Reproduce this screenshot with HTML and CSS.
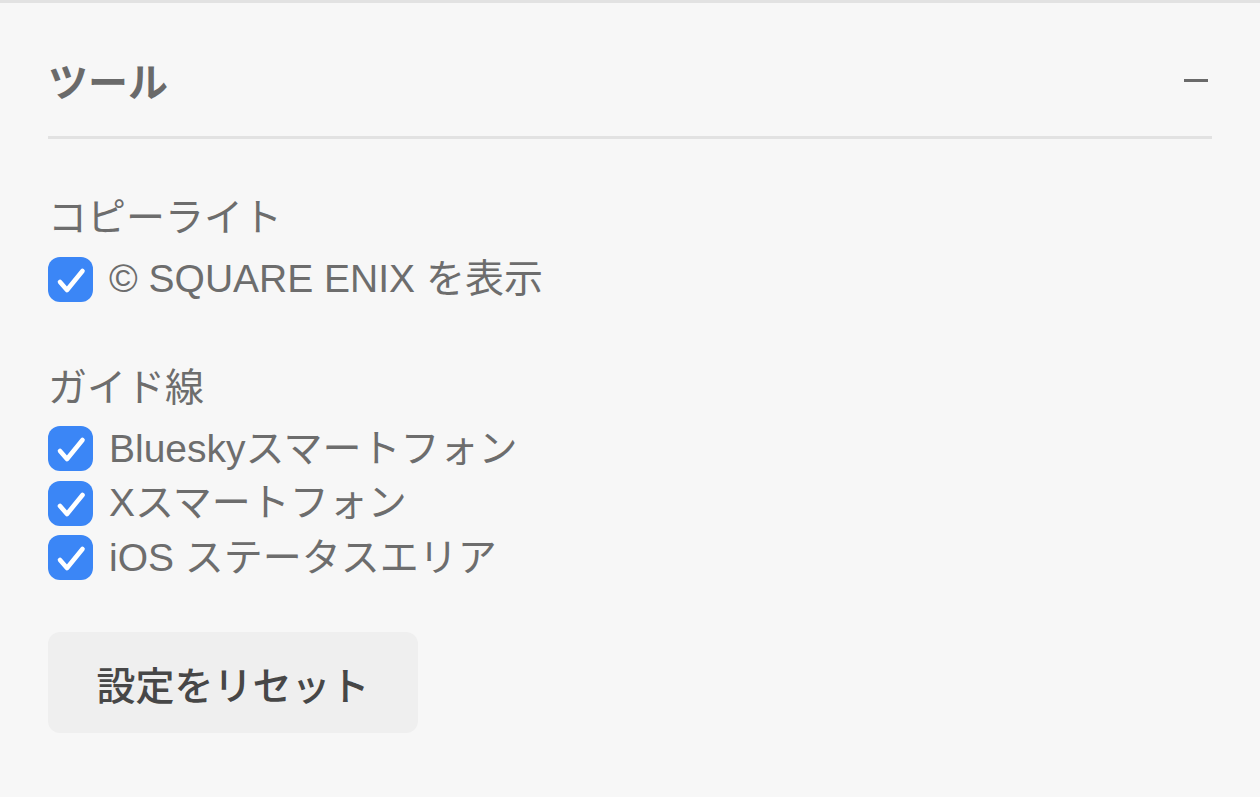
FILE: index.html
```html
<!DOCTYPE html>
<html lang="ja">
<head>
<meta charset="utf-8">
<title>ツール</title>
<link rel="stylesheet" href="styles.css">
</head>
<body>
<section class="panel">
  <header class="panel-header">
    <h2 class="panel-title">ツール</h2>
    <span class="collapse" aria-label="折りたたむ"></span>
  </header>
  <div class="panel-body">
    <div class="group">
      <div class="group-label">コピーライト</div>
      <label class="check-row">
        <span class="checkbox"><svg viewBox="0 0 45 45" width="45" height="45"><path d="M12 25 L19 33 L34.5 14" fill="none" stroke="#fff" stroke-width="4.6" stroke-linecap="round" stroke-linejoin="round"/></svg></span>
        <span class="check-text">© SQUARE ENIX を表示</span>
      </label>
    </div>
    <div class="group">
      <div class="group-label">ガイド線</div>
      <label class="check-row">
        <span class="checkbox"><svg viewBox="0 0 45 45" width="45" height="45"><path d="M12 25 L19 33 L34.5 14" fill="none" stroke="#fff" stroke-width="4.6" stroke-linecap="round" stroke-linejoin="round"/></svg></span>
        <span class="check-text">Blueskyスマートフォン</span>
      </label>
      <label class="check-row">
        <span class="checkbox"><svg viewBox="0 0 45 45" width="45" height="45"><path d="M12 25 L19 33 L34.5 14" fill="none" stroke="#fff" stroke-width="4.6" stroke-linecap="round" stroke-linejoin="round"/></svg></span>
        <span class="check-text">Xスマートフォン</span>
      </label>
      <label class="check-row">
        <span class="checkbox"><svg viewBox="0 0 45 45" width="45" height="45"><path d="M12 25 L19 33 L34.5 14" fill="none" stroke="#fff" stroke-width="4.6" stroke-linecap="round" stroke-linejoin="round"/></svg></span>
        <span class="check-text">iOS ステータスエリア</span>
      </label>
    </div>
    <button class="reset-btn" type="button">設定をリセット</button>
  </div>
</section>
</body>
</html>
```

FILE: styles.css
```css
html, body {
  margin: 0;
  padding: 0;
  background: #f7f7f7;
}
body {
  font-family: "Liberation Sans", "Noto Sans CJK JP", sans-serif;
  color: #6d6d6d;
}
.panel {
  border-top: 3px solid #e2e2e2;
  padding: 0 48px;
  min-height: 794px;
  box-sizing: border-box;
}
.panel-header {
  display: flex;
  align-items: center;
  justify-content: space-between;
  padding-top: 47px;
  padding-bottom: 26px;
  border-bottom: 3px solid #e2e2e2;
}
.panel-title {
  margin: 0;
  font-family: "Noto Sans CJK JP", sans-serif;
  font-size: 40px;
  line-height: 60px;
  font-weight: 700;
  color: #6a6a6a;
}
.collapse {
  display: block;
  width: 24px;
  height: 3px;
  background: #6a6a6a;
  margin-right: 4px;
}
.panel-body {
  display: flex;
  flex-direction: column;
  align-items: flex-start;
  padding-top: 48px;
}
.group {
  display: flex;
  flex-direction: column;
  margin-bottom: 50px;
}
.group-label {
  font-family: "Noto Sans CJK JP", sans-serif;
  font-size: 39px;
  line-height: 54px;
  margin-bottom: 11px;
}
.check-row {
  display: flex;
  align-items: center;
  gap: 16px;
  height: 54.5px;
  font-size: 39px;
}
.checkbox {
  display: flex;
  width: 45px;
  height: 45px;
  border-radius: 12px;
  background: #3b86f6;
  flex-shrink: 0;
}
.check-text {
  line-height: 54px;
}
.reset-btn {
  margin-top: -3px;
  width: 370px;
  height: 101px;
  border: none;
  border-radius: 12px;
  background: #efefef;
  font-family: "Noto Sans CJK JP", sans-serif;
  font-size: 39px;
  font-weight: 500;
  color: #474747;
  padding: 0;
}
```
